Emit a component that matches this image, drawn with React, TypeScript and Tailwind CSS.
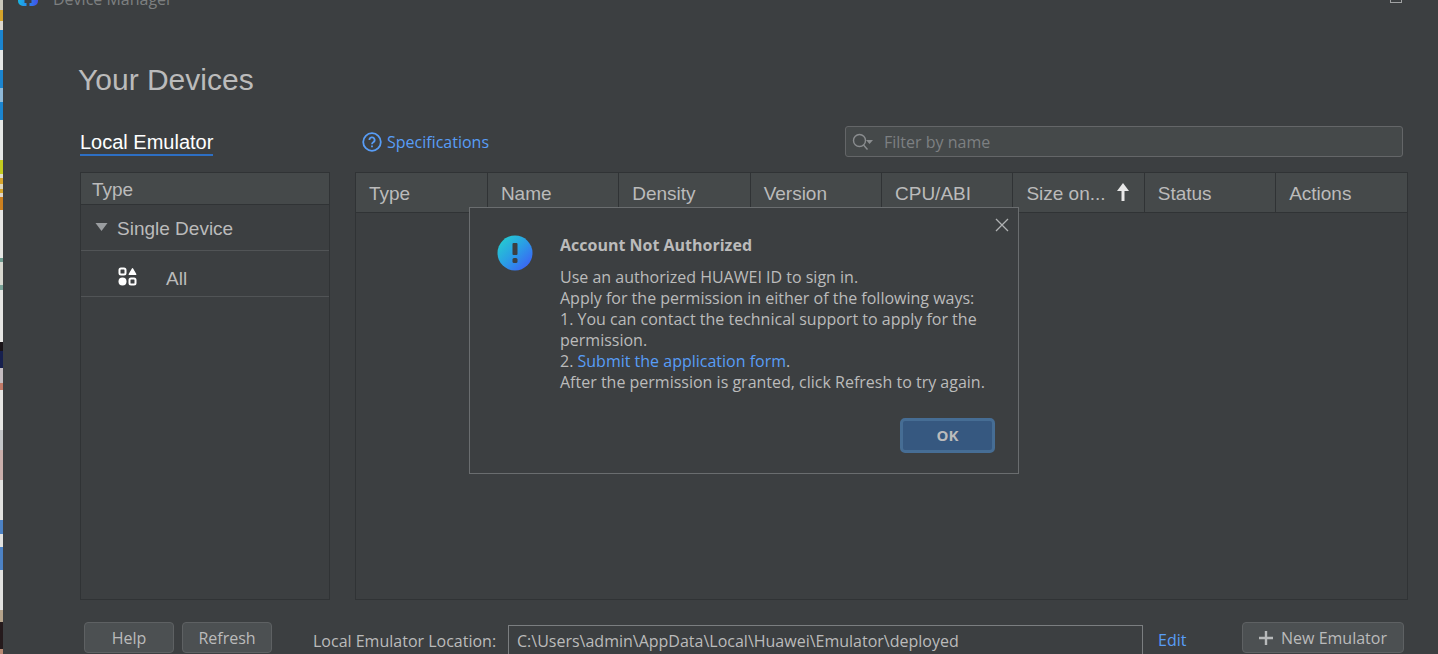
import { useState } from "react";

const columns = ["Type", "Name", "Density", "Version", "CPU/ABI", "Size on...", "Status", "Actions"];

// slices of the desktop that peek out left of the window
const desktop = [
  { h: 10, color: "bg-[#c9c8bc]" },
  { h: 11, color: "bg-[#d6a52c]" },
  { h: 9, color: "bg-[#dcd8cf]" },
  { h: 20, color: "bg-[#1b85d0]" },
  { h: 20, color: "bg-[#e4e6e5]" },
  { h: 18, color: "bg-[#1b85d0]" },
  { h: 14, color: "bg-[#8fb9d8]" },
  { h: 18, color: "bg-[#1b85d0]" },
  { h: 40, color: "bg-[#e6e8e6]" },
  { h: 14, color: "bg-[#c3cb20]" },
  { h: 4, color: "bg-[#e3dfc8]" },
  { h: 6, color: "bg-[#d6a52c]" },
  { h: 5, color: "bg-[#e0d6b8]" },
  { h: 4, color: "bg-[#d6a52c]" },
  { h: 4, color: "bg-[#e0d6c8]" },
  { h: 13, color: "bg-[#cc801f]" },
  { h: 48, color: "bg-[#e6e6e4]" },
  { h: 4, color: "bg-[#6f9c90]" },
  { h: 23, color: "bg-[#d8d8d0]" },
  { h: 5, color: "bg-[#7ba398]" },
  { h: 52, color: "bg-[#e6e6e4]" },
  { h: 9, color: "bg-[#1a1418]" },
  { h: 17, color: "bg-[#17204e]" },
  { h: 15, color: "bg-[#c4bcc0]" },
  { h: 7, color: "bg-[#c17a68]" },
  { h: 40, color: "bg-[#e6e6e4]" },
  { h: 20, color: "bg-[#c4c6c8]" },
  { h: 30, color: "bg-[#cbb0ac]" },
  { h: 40, color: "bg-[#e2e2e0]" },
  { h: 14, color: "bg-[#4d82c4]" },
  { h: 13, color: "bg-[#e2e2e0]" },
  { h: 23, color: "bg-[#4d82c4]" },
  { h: 40, color: "bg-[#e2e2e0]" },
  { h: 12, color: "bg-[#b5a48c]" },
  { h: 27, color: "bg-[#251a1c]" },
  { h: 5, color: "bg-[#b98a74]" },
];

function TitleBar() {
  return (
    <header className="flex h-3 items-end justify-between overflow-hidden pr-9 pl-[15px]">
      <div className="flex items-end gap-[15px]">
        <svg width="20" height="20" viewBox="0 0 20 20" className="mb-[6px]" aria-hidden="true">
          <defs>
            <linearGradient id="logo" x1="0" y1="0" x2="1" y2="0">
              <stop offset="0" stopColor="#19b5e0" />
              <stop offset="0.5" stopColor="#2687ee" />
              <stop offset="1" stopColor="#4450e8" />
            </linearGradient>
          </defs>
          <path
            d="M0 5a5 5 0 0 1 5-5h10a5 5 0 0 1 5 5v10a5 5 0 0 1-5 5h-3.500v-3h2v-3h-7v3h2v3H5a5 5 0 0 1-5-5z"
            fill="url(#logo)"
          />
        </svg>
        <span className="mb-[3px] text-base leading-5 text-[#7d7f80]">Device Manager</span>
      </div>
      <button aria-label="Maximize" className="mb-[9px] h-3 w-3 border border-[#a0a2a3]" />
    </header>
  );
}

function Sidebar() {
  const [open, setOpen] = useState(true);

  return (
    <aside className="w-[250px] shrink-0 border border-[#303335] font-['Liberation_Sans',Arial,sans-serif] text-[19px] leading-6">
      <h2 className="flex h-8 items-center border-b border-[#303335] bg-[#45494a] px-[11px] pt-[2px]">Type</h2>
      <button
        onClick={() => setOpen(!open)}
        aria-expanded={open}
        className="flex h-[46px] w-full items-center gap-[9px] border-b border-[#515456] px-[14px] pt-[2px]"
      >
        <svg width="13" height="8" viewBox="0 0 13 8" className="mb-1" aria-hidden="true">
          <path d="M0.5 0h12L6.5 8z" fill="#9a9da0" />
        </svg>
        Single Device
      </button>
      {open && (
        <button className="flex h-[46px] w-full items-center gap-[29px] border-b border-[#515456] px-[37px] pt-[10px]">
          <svg width="19" height="19" viewBox="0 0 19 19" className="mb-1" fill="none" stroke="#fff" strokeWidth="2" aria-hidden="true">
            <rect x="1.5" y="1.5" width="6" height="6" rx="1.5" />
            <path d="M14.5 1.8l3.2 5.6h-6.4z" fill="#fff" strokeWidth="1.4" strokeLinejoin="round" />
            <circle cx="4.5" cy="14.5" r="4" fill="#fff" stroke="none" />
            <rect x="11.5" y="11.5" width="6" height="6" rx="1.5" />
          </svg>
          All
        </button>
      )}
    </aside>
  );
}

function DeviceTable() {
  return (
    <div className="min-w-0 flex-1 border border-[#303335]">
      <table className="w-full table-fixed font-['Liberation_Sans',Arial,sans-serif] text-[19px] leading-6">
        <thead>
          <tr className="border-b border-[#303335] bg-[#45494a]">
            {columns.map((name) => (
              <th key={name} className="h-[39px] border-r border-[#303335] pt-1 pr-2 pl-[13px] text-left font-normal last:border-r-0">
                <span className="flex items-center gap-[10px] whitespace-nowrap">
                  {name}
                  {name === "Size on..." && (
                    <svg width="14" height="18" viewBox="0 0 14 18" className="mb-1 shrink-0" aria-hidden="true">
                      <path d="M7 0l6 8H8.5v10h-3V8H1z" fill="#e8e8e8" />
                    </svg>
                  )}
                </span>
              </th>
            ))}
          </tr>
        </thead>
      </table>
    </div>
  );
}

function AccountDialog() {
  return (
    <div
      role="dialog"
      aria-labelledby="dialog-title"
      className="absolute top-[207px] left-[466px] flex w-[550px] gap-[27px] border border-[#6a6d6f] bg-[#3c3f41] pt-[27px] pr-[23px] pb-5 pl-[27px]"
    >
      <button aria-label="Close" className="absolute top-[10px] right-[9px]">
        <svg width="14" height="14" viewBox="0 0 14 14" stroke="#b0b2b3" strokeWidth="1.3" aria-hidden="true">
          <path d="M1 1l12 12M13 1L1 13" />
        </svg>
      </button>
      <svg width="36" height="36" viewBox="0 0 36 36" className="shrink-0" aria-hidden="true">
        <defs>
          <linearGradient id="notice" x1="0.1" y1="0.1" x2="0.9" y2="0.9">
            <stop offset="0" stopColor="#25cbd0" />
            <stop offset="0.5" stopColor="#2a9de6" />
            <stop offset="1" stopColor="#3c62f5" />
          </linearGradient>
        </defs>
        <circle cx="18" cy="18" r="17.5" fill="url(#notice)" />
        <rect x="15.5" y="8" width="5" height="12" rx="1" fill="#3c3f41" />
        <rect x="15.5" y="23" width="5" height="5" rx="1.5" fill="#3c3f41" />
      </svg>
      <div className="flex flex-1 flex-col">
        <h2 id="dialog-title" className="text-base leading-5 font-bold">Account Not Authorized</h2>
        <p className="mt-3 text-base leading-[21px]">
          Use an authorized HUAWEI ID to sign in.
          <br />
          Apply for the permission in either of the following ways:
          <br />
          1. You can contact the technical support to apply for the permission.
          <br />
          2. <a href="#form" className="text-[#589df6]">Submit the application form</a>.
          <br />
          After the permission is granted, click Refresh to try again.
        </p>
        <button className="mt-[25px] h-[35px] w-[95px] self-end rounded-[5px] border-3 border-[#466d94] bg-[#365880] text-[15px] font-bold">
          OK
        </button>
      </div>
    </div>
  );
}

function Footer() {
  const button = "h-[31px] rounded border border-[#5e6163] bg-[#4c5052]";

  return (
    <footer className="flex h-[54px] items-start overflow-hidden pt-[22px] pr-1 pl-1 text-base leading-5">
      <button className={`${button} w-[90px]`}>Help</button>
      <button className={`${button} ml-2 w-[90px]`}>Refresh</button>
      <label htmlFor="location" className="mt-[9px] ml-[41px] w-[195px]">Local Emulator Location:</label>
      <input
        id="location"
        readOnly
        defaultValue="C:\Users\admin\AppData\Local\Huawei\Emulator\deployed"
        className="mt-[3px] h-8 min-w-0 flex-1 border border-[#7b7e80] px-2 outline-none"
      />
      <a href="#edit" className="mt-2 ml-[15px] w-[84px] text-[#589df6]">Edit</a>
      <button className={`${button} flex w-[162px] items-center justify-center gap-2`}>
        <svg width="14" height="14" viewBox="0 0 14 14" stroke="#b8babb" strokeWidth="2.4" aria-hidden="true">
          <path d="M7 0v14M0 7h14" />
        </svg>
        New Emulator
      </button>
    </footer>
  );
}

export default function App() {
  return (
    <div className="flex h-screen overflow-hidden bg-[#3c3f41] font-['Open_Sans','Noto_Sans',sans-serif] text-[#bbbbbb]">
      <div className="flex w-[3px] shrink-0 flex-col" aria-hidden="true">
        {desktop.map((part, i) => (
          <div key={i} className={part.color} style={{ flexGrow: part.h }} />
        ))}
      </div>
      <div className="relative flex min-w-0 flex-1 flex-col">
        <TitleBar />
        <main className="flex min-h-0 flex-1 flex-col pr-[30px] pl-[77px]">
          <h1 className="-ml-[2px] mt-[50px] font-['Liberation_Sans',Arial,sans-serif] text-[30px] leading-9">Your Devices</h1>
          <div className="mt-7 mb-[15px] flex h-[31px] items-center">
            <div className="w-[282px]">
              <button className="mt-[3px] border-b-2 border-[#2d6fc4] font-['Liberation_Sans',Arial,sans-serif] text-xl leading-6 text-white">
                Local Emulator
              </button>
            </div>
            <a href="#specifications" className="flex items-center gap-[5px] text-base text-[#589df6]">
              <svg width="20" height="20" viewBox="0 0 20 20" fill="none" stroke="#589df6" strokeWidth="1.8" aria-hidden="true">
                <circle cx="10" cy="10" r="8.8" />
                <path d="M7.4 8a2.6 2.6 0 1 1 3.9 2.2c-.8.5-1.3.9-1.3 2" />
                <path d="M10 13.4v1.8" />
              </svg>
              Specifications
            </a>
            <label className="mr-[5px] ml-auto flex h-[31px] w-[558px] items-center gap-[10px] rounded-[3px] border border-[#646668] bg-[#45494a] px-[6px]">
              <svg width="22" height="18" viewBox="0 0 22 18" fill="none" stroke="#8a8d8f" strokeWidth="1.4" aria-hidden="true">
                <circle cx="7.5" cy="7.5" r="6" />
                <path d="M11.5 12l4 4.5" />
                <path d="M14 7h7l-3.500 4z" fill="#8a8d8f" stroke="none" />
              </svg>
              <input
                aria-label="Filter by name"
                placeholder="Filter by name"
                className="min-w-0 flex-1 text-base outline-none placeholder:text-[#7d8082]"
              />
            </label>
          </div>
          <div className="flex min-h-0 flex-1 gap-[25px]">
            <Sidebar />
            <DeviceTable />
          </div>
          <Footer />
        </main>
        <AccountDialog />
      </div>
    </div>
  );
}
